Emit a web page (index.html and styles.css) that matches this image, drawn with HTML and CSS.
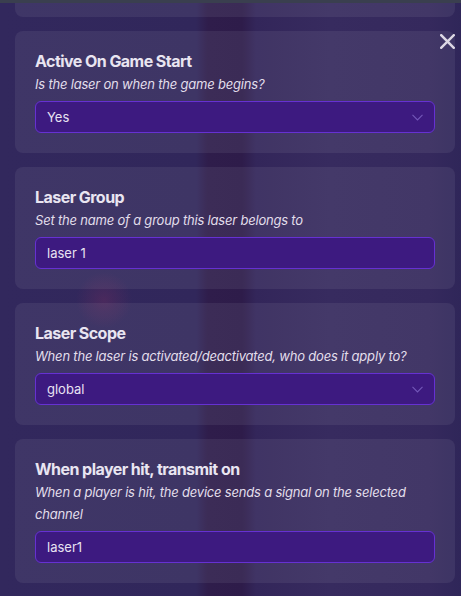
FILE: index.html
```html
<!DOCTYPE html>
<html>
<head>
<meta charset="utf-8">
<link rel="stylesheet" href="styles.css">
</head>
<body>
<div class="topbar"></div>
<div class="list">
  <div class="card stub"></div>

  <div class="card">
    <div class="title">Active On Game Start</div>
    <div class="desc">Is the laser on when the game begins?</div>
    <div class="field">
      <span>Yes</span>
      <svg class="chev" width="11" height="7" viewBox="0 0 11 7"><path d="M0.5 0.8 L5.5 6 L10.5 0.8" fill="none" stroke="#7357b8" stroke-width="1.1"/></svg>
    </div>
  </div>

  <div class="card">
    <div class="title">Laser Group</div>
    <div class="desc">Set the name of a group this laser belongs to</div>
    <div class="field"><span>laser 1</span></div>
  </div>

  <div class="card">
    <div class="title">Laser Scope</div>
    <div class="desc">When the laser is activated/deactivated, who does it apply to?</div>
    <div class="field">
      <span>global</span>
      <svg class="chev" width="11" height="7" viewBox="0 0 11 7"><path d="M0.5 0.8 L5.5 6 L10.5 0.8" fill="none" stroke="#7357b8" stroke-width="1.1"/></svg>
    </div>
  </div>

  <div class="card">
    <div class="title">When player hit, transmit on</div>
    <div class="desc">When a player is hit, the device sends a signal on the selected channel</div>
    <div class="field"><span>laser1</span></div>
  </div>
</div>
<svg class="close" width="15" height="15" viewBox="0 0 15 15"><path d="M1.2 1.2 L13.8 13.8 M13.8 1.2 L1.2 13.8" stroke="#dcd8e4" stroke-width="2.4" stroke-linecap="square"/></svg>
</body>
</html>
```

FILE: styles.css
```css
html, body {
  margin: 0;
  padding: 0;
  height: 100%;
  overflow: hidden;
}
body {
  font-family: Inter, "Noto Sans", sans-serif;
  background:
    radial-gradient(circle 28px at 104px 300px, rgba(125, 45, 95, 0.32), rgba(125, 45, 95, 0) 100%),
    linear-gradient(90deg, #32285d 0, #31275b 196px, #2f1d4b 208px, #2e1c4a 242px, #33265a 256px, #372b5f 330px, #35295d 430px, #2f2659 461px);
  position: relative;
}
.topbar {
  height: 3px;
  background: #3a3f4f;
}
.list {
  display: flex;
  flex-direction: column;
  gap: 14px;
  padding: 0 6px 0 15px;
}
.card {
  background: rgba(255, 255, 255, 0.065);
  border-radius: 8px;
  padding: 18px 20px 20px;
}
.card.stub {
  height: 14px;
  padding: 0;
  border-radius: 0 0 8px 8px;
}
.title {
  color: #e9e5f1;
  font-size: 16px;
  font-weight: 700;
  line-height: 24px;
  letter-spacing: -0.55px;
}
.desc {
  color: #e2deeb;
  font-size: 13px;
  font-style: italic;
  line-height: 22px;
  letter-spacing: -0.2px;
}
.field {
  margin-top: 6px;
  height: 32px;
  box-sizing: border-box;
  border: 1px solid #6631d2;
  border-radius: 6px;
  background: #3d1a80;
  display: flex;
  align-items: center;
  justify-content: space-between;
  padding: 0 11px 0 11px;
  color: #e8e2f2;
  font-size: 13px;
}
.chev {
  display: block;
}
.close {
  position: absolute;
  left: 440px;
  top: 34px;
}
```
